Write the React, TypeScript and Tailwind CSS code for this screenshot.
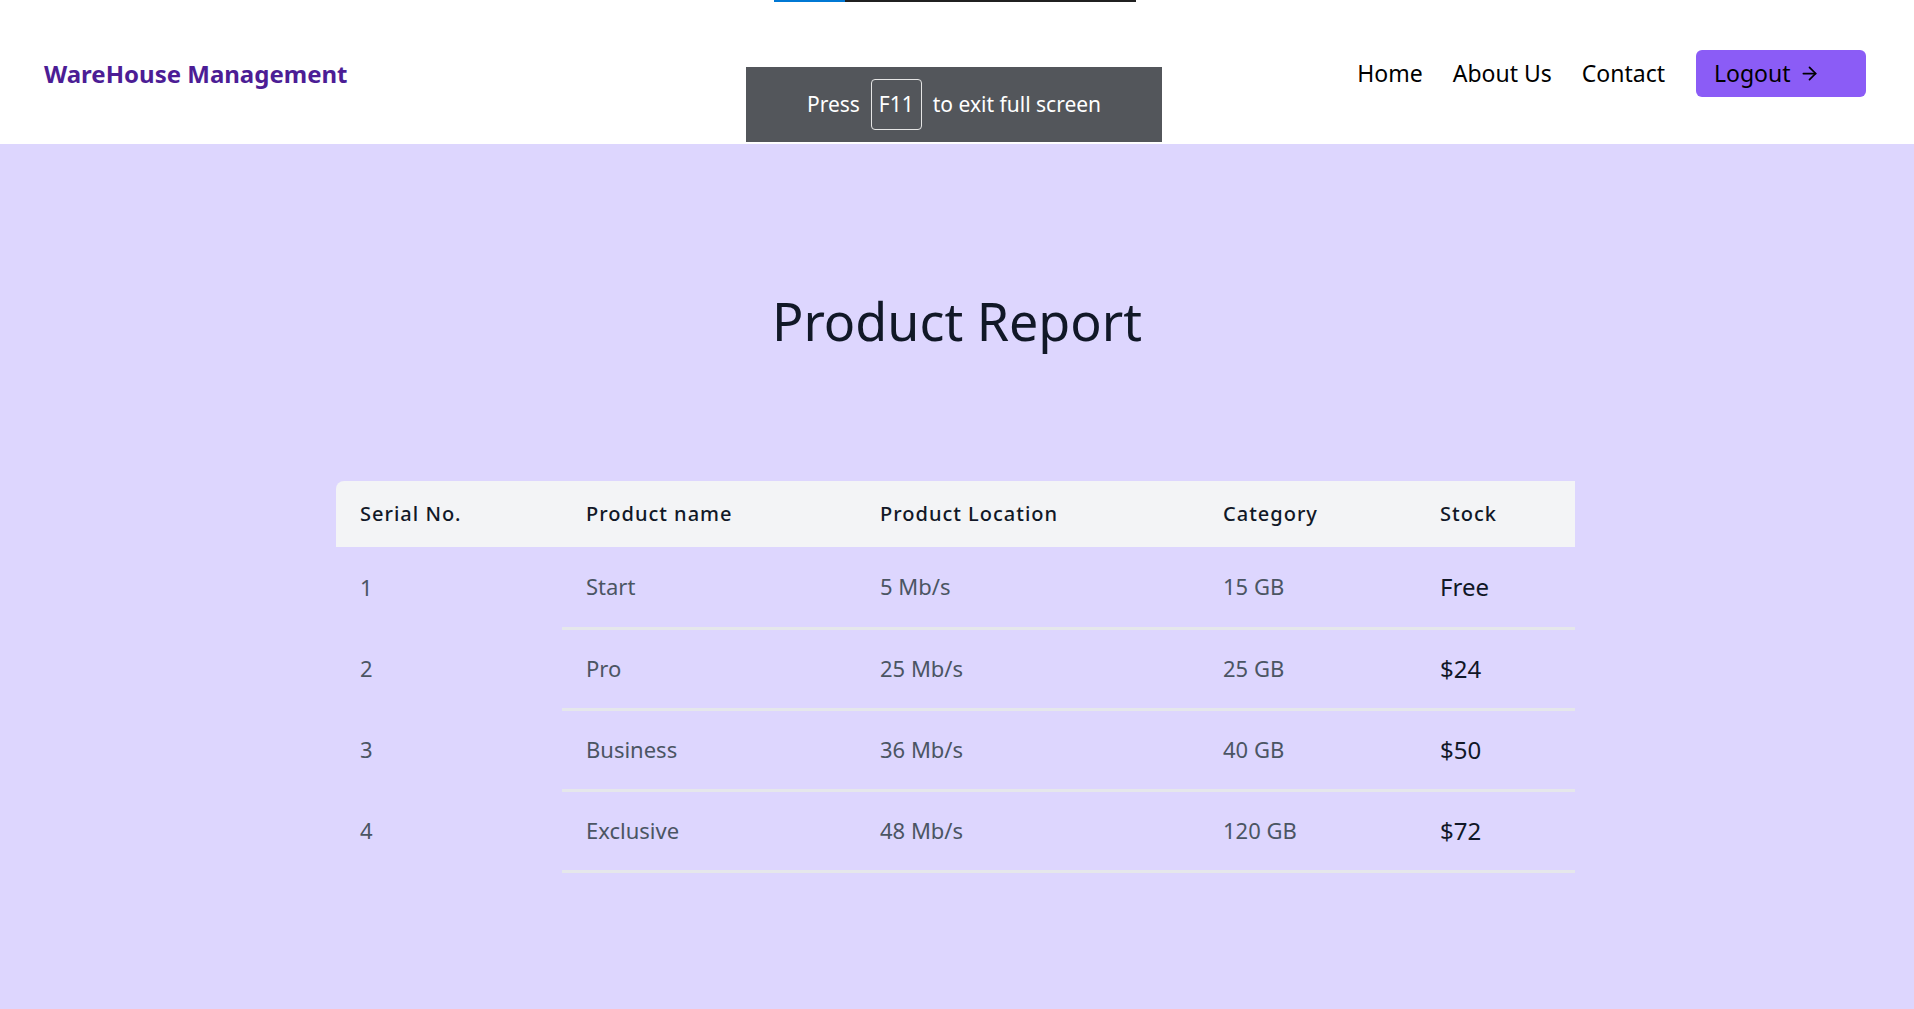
import { ArrowRight } from "lucide-react";

type Row = {
  id: number;
  name: string;
  location: string;
  category: string;
  stock: string;
};

const rows: Row[] = [
  { id: 1, name: "Start", location: "5 Mb/s", category: "15 GB", stock: "Free" },
  { id: 2, name: "Pro", location: "25 Mb/s", category: "25 GB", stock: "$24" },
  { id: 3, name: "Business", location: "36 Mb/s", category: "40 GB", stock: "$50" },
  { id: 4, name: "Exclusive", location: "48 Mb/s", category: "120 GB", stock: "$72" },
];

export default function App() {
  return (
    <div className="relative min-h-screen flex flex-col bg-[#ddd6fe] font-['Noto_Sans',sans-serif]">
      {/* ── Header ── */}
      <header className="h-[144px] bg-white flex items-center justify-between pl-[44px] pr-[48px]">
        <a className="mt-[3px] text-[24px] font-bold text-[#4c1d95]">
          WareHouse Management
        </a>
        <nav className="flex items-center pt-[2px]">
          <a className="text-[23px] text-black mr-[30px]">Home</a>
          <a className="text-[23px] text-black mr-[30px]">About Us</a>
          <a className="text-[23px] text-black mr-[31px]">Contact</a>
          <button className="w-[170px] h-[47px] bg-[#8b5cf6] rounded-md flex items-center gap-2 pl-[18px] text-[23px] text-black">
            Logout
            <ArrowRight size={21} strokeWidth={2} />
          </button>
        </nav>
      </header>

      {/* browser full screen hint */}
      <div className="absolute left-[774px] top-0 w-[362px] h-[2px] flex">
        <div className="w-[71px] bg-[#0078d4]" />
        <div className="flex-1 bg-[#202020]" />
      </div>
      <div className="absolute left-[746px] top-[67px] w-[416px] h-[75px] bg-[#53565b] flex items-center justify-center gap-[11px] text-white text-[21px]">
        <span>Press</span>
        <span className="h-[51px] px-[7px] border border-[#e5e5e5] rounded flex items-center">
          F11
        </span>
        <span>to exit full screen</span>
      </div>

      {/* ── Report ── */}
      <main className="flex-1 flex flex-col items-center">
        <h1 className="mt-[151px] text-[52px] leading-none text-[#111827]">
          Product Report
        </h1>

        <table className="mt-[134px] mr-[3px] w-[1239px] text-left">
          <thead>
            <tr className="h-[66px] text-[20px] tracking-wider text-[#111827]">
              <th className="w-[226px] pl-6 font-medium bg-[#f3f4f6] rounded-tl-lg">Serial No.</th>
              <th className="w-[294px] pl-6 font-medium bg-[#f3f4f6]">Product name</th>
              <th className="w-[343px] pl-6 font-medium bg-[#f3f4f6]">Product Location</th>
              <th className="w-[217px] pl-6 font-medium bg-[#f3f4f6]">Category</th>
              <th className="pl-6 font-medium bg-[#f3f4f6]">Stock</th>
            </tr>
          </thead>
          <tbody>
            {rows.map((r) => (
              <tr key={r.id} className="h-[81px] text-[22px] text-[#4b5563]">
                <td className="pl-6">{r.id}</td>
                <td className="pl-6 border-b-[3px] border-[#e5e7eb]">{r.name}</td>
                <td className="pl-6 border-b-[3px] border-[#e5e7eb]">{r.location}</td>
                <td className="pl-6 border-b-[3px] border-[#e5e7eb]">{r.category}</td>
                <td className="pl-6 border-b-[3px] border-[#e5e7eb] text-[24px] text-[#111827]">
                  {r.stock}
                </td>
              </tr>
            ))}
          </tbody>
        </table>
      </main>
    </div>
  );
}
